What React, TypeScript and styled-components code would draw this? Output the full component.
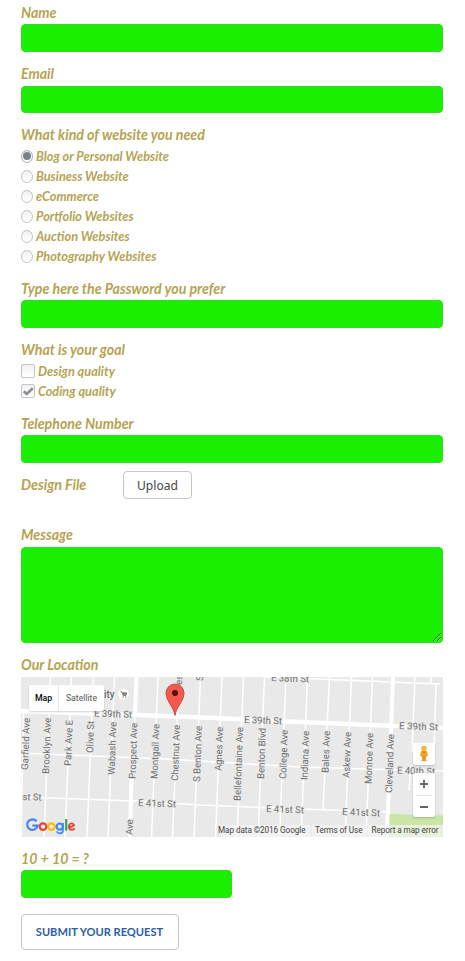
import React from 'react';
import styled, { createGlobalStyle } from 'styled-components';

const GlobalStyle = createGlobalStyle`
  * { box-sizing: border-box; }
  body { margin: 0; background: #fff; }
`;

const Form = styled.form`
  width: 465px;
  height: 961px;
  padding: 3px 22px 0 21px;
  overflow: hidden;
  font-family: Lato, Carlito, sans-serif;
  color: #b5a352;
`;

const Field = styled.div<{ $h: number }>`
  height: ${(p) => p.$h}px;
`;

const Label = styled.label<{ $h?: number }>`
  display: block;
  width: max-content;
  height: ${(p) => p.$h ?? 21}px;
  line-height: 19px;
  font-size: 14.2px;
  font-weight: 700;
  font-style: italic;
  white-space: nowrap;
`;

const MessageLabel = styled(Label)`
  height: 19px;
  line-height: 14px;
`;

const Input = styled.input<{ $w?: number; $h?: number }>`
  display: block;
  width: ${(p) => p.$w ?? 422}px;
  height: ${(p) => p.$h ?? 28}px;
  padding: 0 8px;
  border: 1px solid #35dc22;
  border-radius: 4px;
  background: #1bef00;
  outline: 0;
`;

const AreaWrap = styled.div`
  position: relative;
  width: 422px;
  height: 96px;
`;

const Area = styled.textarea`
  display: block;
  width: 100%;
  height: 100%;
  border: 1px solid #35dc22;
  border-radius: 4px;
  background: #1bef00;
  outline: 0;
  resize: none;
`;

const Grip = styled.svg`
  position: absolute;
  right: 2px;
  bottom: 2px;
`;

const Option = styled.label`
  display: flex;
  align-items: center;
  gap: 3px;
  height: 20px;
  font-size: 12.75px;
  line-height: 15px;
  font-weight: 700;
  font-style: italic;
  white-space: nowrap;
`;

const Radio = styled.span<{ $on?: boolean }>`
  display: grid;
  place-items: center;
  width: 12px;
  height: 13px;
  border: 1px solid ${(p) => (p.$on ? '#a9b0ba' : '#c6c6c6')};
  border-radius: 50%;
  background: linear-gradient(#f1f1f1, #fff);
  &::after {
    content: '';
    width: 8px;
    height: 8px;
    border-radius: 50%;
    background: ${(p) => (p.$on ? '#7b8089' : 'transparent')};
  }
`;

const Check = styled.span`
  display: grid;
  place-items: center;
  width: 14px;
  height: 14px;
  border: 1px solid #c3c6ca;
  border-radius: 2px;
  background: linear-gradient(#f1f1f1, #fff);
`;

const FileRow = styled.div`
  display: flex;
  height: 57px;
  padding-top: 4px;
`;

const FileLabel = styled(Label)`
  width: 102px;
`;

const Upload = styled.button`
  width: 69px;
  height: 28px;
  margin-top: -4px;
  padding: 0;
  border: 1px solid #c6c6c6;
  border-radius: 4px;
  background: #fff;
  color: #444;
  font: 12.1px 'Noto Sans', sans-serif;
`;

const Submit = styled.button`
  width: 158px;
  height: 36px;
  padding: 0 1px 1px 0;
  border: 1px solid #c6c6c6;
  border-radius: 4px;
  background: #fff;
  color: #2b5ca8;
  font: 700 11.1px Lato, sans-serif;
  white-space: nowrap;
`;

const MapFrame = styled.div`
  position: relative;
  width: 422px;
  height: 160px;
  overflow: hidden;
  background: #e9e9e9;
  font-family: Roboto, sans-serif;
`;

const MapArt = styled.svg`
  display: block;
`;

const MapTypes = styled.div`
  position: absolute;
  left: 8px;
  top: 8px;
  display: flex;
  height: 26px;
  border-radius: 2px;
  background: #fff;
  box-shadow: 0 1px 2px rgba(0, 0, 0, 0.18);
`;

const MapType = styled.span<{ $active?: boolean; $w: number }>`
  width: ${(p) => p.$w}px;
  border-left: ${(p) => (p.$active ? 0 : '1px solid #e6e6e6')};
  text-align: center;
  font-size: 8.7px;
  line-height: 26px;
  font-weight: ${(p) => (p.$active ? 500 : 400)};
  color: ${(p) => (p.$active ? '#000' : '#565656')};
`;

const Control = styled.div<{ $top: number; $h: number }>`
  position: absolute;
  left: 392px;
  top: ${(p) => p.$top}px;
  width: 22px;
  height: ${(p) => p.$h}px;
  border-radius: 2px;
  background: #fff;
  box-shadow: 0 1px 2px rgba(0, 0, 0, 0.2);
  svg { display: block; }
`;

const avenues: [string, number, number, number][] = [
  ['Garfield Ave', 28, 718, 770],
  ['Brooklyn Ave', 49, 718, 774],
  ['Park Ave E', 71, 720, 766],
  ['Olive St', 93, 721, 753],
  ['Wabash Ave', 114.5, 722, 775],
  ['Prospect Ave', 135.5, 723, 779],
  ['Montgall Ave', 157.5, 724, 779],
  ['Chestnut Ave', 178, 725, 781],
  ['S Benton Ave', 200, 726, 782],
  ['Agnes Ave', 221.5, 727, 771],
  ['Bellefontaine Ave', 240.5, 727, 801],
  ['Benton Blvd', 264, 728, 779],
  ['College Ave', 286, 730, 779],
  ['Indiana Ave', 307.5, 731, 780],
  ['Bales Ave', 328.5, 731, 773],
  ['Askew Ave', 349.5, 732, 778],
  ['Monroe Ave', 371.5, 733, 784],
  ['Cleveland Ave', 392, 734, 793],
];

const streets: [string, number, number, number][] = [
  ['E 38th St', 271, 681, 38],
  ['E 39th St', 94, 716.5, 38],
  ['E 39th St', 244, 723, 38],
  ['E 39th St', 399, 729, 39],
  ['E 40th St', 397, 773.5, 38],
  ['E 41st St', 138, 806, 38],
  ['E 41st St', 266, 812, 38],
  ['E 41st St', 342, 815, 38],
  ['st St', 22.5, 800, 19],
];

const roads = [44, 65, 87, 108, 130, 151.5, 172.5, 194, 215.5, 237, 258, 279.5, 301, 323, 345, 366];

function LocationMap() {
  return (
    <MapFrame>
      <MapArt width="422" height="160" viewBox="21 677 422 160" fontFamily="Roboto, sans-serif">
        <g stroke="#fff" fill="none">
          {roads.map((x) => (
            <path key={x} d={`M${x + 6.5} 677L${x} ${x === 323 ? 810 : 837}`} strokeWidth="1.5" />
          ))}
          <path d="M23.5 712L21 837M415 677L412 752M436 684L434 752M411 765L409 791M431 677V683" strokeWidth="1.5" />
          <path d="M136.5 677L135 716M131.5 777L130 837M393 677L387 837" strokeWidth="4" />
          <path d="M21 711L137 715L215 718L300 722L443 728" strokeWidth="4.4" />
          <path d="M265 677L440 684M21 753L165 759L300 767L400 770L443 771M21 797L135 801L200 805L300 809L388 812" strokeWidth="1.7" />
        </g>
        <path d="M389.5 814L443 815.5V837H389.5Z" fill="#cae5a5" />
        <g fontSize="9.6" fill="#707070" stroke="#e9e9e9" strokeWidth="1.8" paintOrder="stroke" strokeLinejoin="round">
          {avenues.map(([name, x, top, bottom]) => (
            <text key={name} transform={`translate(${x} ${bottom}) rotate(-88)`} textLength={bottom - top}>{name}</text>
          ))}
          {streets.map(([name, x, y, w], i) => (
            <text key={i} transform={`translate(${x} ${y}) rotate(2)`} textLength={w}>{name}</text>
          ))}
          <text transform="translate(132.5 835) rotate(-88)">Ave</text>
          <text transform="translate(182 685) rotate(-88)">es</text>
          <text transform="translate(203 681) rotate(-88)">S</text>
          <text x="104" y="698" fontSize="10" fill="#555">ity</text>
        </g>
        <circle cx="123.5" cy="694" r="5.3" fill="#fff" />
        <path d="M120.5 691.8H122L123 695.5H126L126.7 692.8H122.3" fill="#888" stroke="#777" strokeWidth=".8" />
        <circle cx="123.3" cy="697" r=".7" fill="#777" />
        <circle cx="125.7" cy="697" r=".7" fill="#777" />
        <path d="M175 715.5C174 707 166 701.5 166 693A9 9 0 0 1 184 693C184 701.5 176 707 175 715.5Z" fill="#f4594e" stroke="#b63a33" strokeWidth=".8" />
        <circle cx="175" cy="693" r="3" fill="#54100c" />
        <path d="M221 825H443V837H221Z" fill="#f5f5f5" opacity=".7" />
        <path d="M311 825V837M367 825V837" stroke="#ddd" strokeWidth=".6" />
        <g fontSize="8.2" fill="#444">
          <text x="218" y="833" textLength="87.5">Map data ©2016 Google</text>
          <text x="315" y="833" textLength="47.5">Terms of Use</text>
          <text x="371.5" y="833" textLength="67">Report a map error</text>
        </g>
        <g fill="none" strokeWidth="2.2">
          <path d="M36.6 821.3A5.3 5.3 0 1 0 37.7 825.6H32.4" stroke="#4285f4" />
          <circle cx="43" cy="826.6" r="3.3" stroke="#ea4335" />
          <circle cx="51.4" cy="826.6" r="3.3" stroke="#fbbc05" />
          <circle cx="59.7" cy="826.6" r="3.1" stroke="#4285f4" />
          <path d="M63 823V830Q63 833.4 59.8 833.4Q57.6 833.4 56.6 831.4" stroke="#4285f4" strokeWidth="1.7" />
          <path d="M66.2 819V830.6" stroke="#34a853" />
          <path d="M69.3 827.6L74.1 825.4Q73 823.1 70.9 823.5Q68.6 824.3 68.9 827Q69.5 829.8 71.9 829.8Q73.7 829.6 74.6 828.2" stroke="#ea4335" strokeWidth="1.8" />
        </g>
      </MapArt>
      <MapTypes>
        <MapType $active $w={29}>Map</MapType>
        <MapType $w={46}>Satellite</MapType>
      </MapTypes>
      <Control $top={66} $h={22}>
        <svg width="22" height="22" viewBox="0 0 22 22">
          <ellipse cx="11" cy="17.5" rx="4" ry="1.2" fill="#ddd" />
          <path d="M8 8.5Q11 6.5 14 8.5L15 13L13.2 13.5L12.7 18H9.3L8.8 13.5L7 13Z" fill="#efa52a" />
          <circle cx="11" cy="5.5" r="2.7" fill="#f6b632" />
          <path d="M9.2 8.2L11 10L12.8 8.2M11 13V18" stroke="#bd7818" fill="none" strokeWidth=".7" />
        </svg>
      </Control>
      <Control $top={96} $h={44}>
        <svg width="22" height="44" viewBox="0 0 22 44">
          <path d="M7 11H15M11 7V15M7 34H15" stroke="#666" strokeWidth="1.9" />
          <path d="M3 22.5H19" stroke="#e2e2e2" />
        </svg>
      </Control>
    </MapFrame>
  );
}

const kinds = [
  'Blog or Personal Website',
  'Business Website',
  'eCommerce',
  'Portfolio Websites',
  'Auction Websites',
  'Photography Websites',
];

export default function App() {
  return (
    <>
      <GlobalStyle />
      <Form onSubmit={(e) => e.preventDefault()}>
        <Field $h={61}><Label>Name</Label><Input /></Field>
        <Field $h={61}><Label $h={22}>Email</Label><Input $h={27} /></Field>
        <Field $h={154}>
          <Label $h={21}>What kind of website you need</Label>
          {kinds.map((name, i) => (
            <Option key={name}><Radio $on={i === 0} />{name}</Option>
          ))}
        </Field>
        <Field $h={61}><Label>Type here the Password you prefer</Label><Input type="password" /></Field>
        <Field $h={74}>
          <Label>What is your goal</Label>
          <Option><Check />Design quality</Option>
          <Option>
            <Check>
              <svg width="12" height="12" viewBox="0 0 12 12"><path d="M1.8 6.3L4.7 9L10.8 3.2" fill="none" stroke="#8d9299" strokeWidth="2.7" /></svg>
            </Check>
            Coding quality
          </Option>
        </Field>
        <Field $h={57}><Label>Telephone Number</Label><Input /></Field>
        <FileRow><FileLabel>Design File</FileLabel><Upload type="button">Upload</Upload></FileRow>
        <Field $h={127}>
          <MessageLabel>Message</MessageLabel>
          <AreaWrap>
            <Area />
            <Grip width="8" height="8" viewBox="0 0 8 8">
              <path d="M0 8L8 0M4 8L8 4" stroke="#176b10" />
              <path d="M1 8L8 1M5 8L8 5" stroke="#a8f59f" strokeWidth=".5" />
            </Grip>
          </AreaWrap>
        </Field>
        <Field $h={194}><Label $h={22}>Our Location</Label><LocationMap /></Field>
        <Field $h={65}><Label>10 + 10 = ?</Label><Input $w={211} /></Field>
        <Submit>SUBMIT YOUR REQUEST</Submit>
      </Form>
    </>
  );
}
